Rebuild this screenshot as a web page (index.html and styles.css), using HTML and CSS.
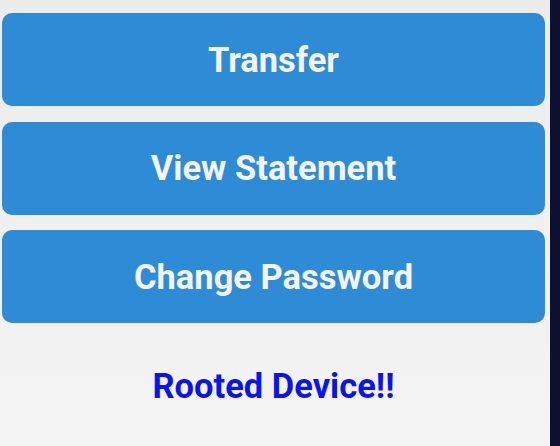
FILE: index.html
```html
<!DOCTYPE html>
<html>
<head>
<meta charset="utf-8">
<link rel="stylesheet" href="styles.css">
</head>
<body>
<div class="screen">
  <main class="content">
    <button class="action">Transfer</button>
    <button class="action">View Statement</button>
    <button class="action">Change Password</button>
    <p class="status">Rooted Device!!</p>
  </main>
  <div class="edge"></div>
</div>
</body>
</html>
```
FILE: styles.css
```css
html, body {
  margin: 0;
  padding: 0;
}
body {
  width: 560px;
  height: 446px;
  overflow: hidden;
  font-family: Roboto, "Liberation Sans", sans-serif;
}
.screen {
  display: flex;
  height: 446px;
}
.content {
  flex: 1;
  display: flex;
  flex-direction: column;
  gap: 15.5px;
  padding: 13px 5px 0 2px;
  background: linear-gradient(#ececec, #f4f4f4);
}
.edge {
  width: 10px;
  background: #0e1030;
}
.action {
  height: 93px;
  border: none;
  border-radius: 10px;
  background: #2e8cd6;
  color: #f4f4f4;
  font-family: Roboto, "Liberation Sans", sans-serif;
  font-weight: 700;
  font-size: 34.5px;
  padding: 0;
}
.status {
  margin: 27px 0 0;
  text-align: center;
  color: #0a14f2;
  font-weight: 700;
  font-size: 34.5px;
}
```
